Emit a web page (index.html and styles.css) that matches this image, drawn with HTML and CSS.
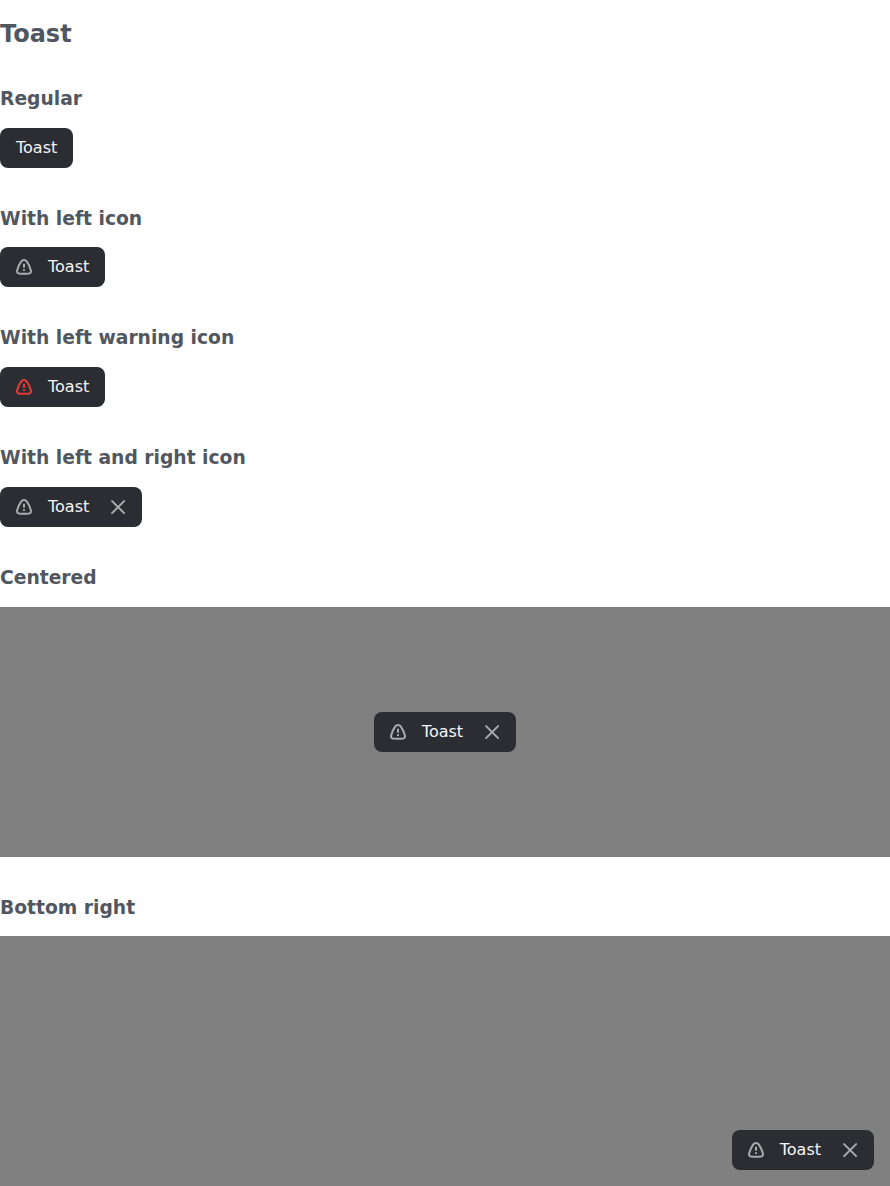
FILE: index.html
```html
<!DOCTYPE html>
<html lang="en">
<head>
<meta charset="utf-8">
<title>Toast</title>
<link rel="stylesheet" href="styles.css">
</head>
<body>
<svg class="symbols" aria-hidden="true">
  <symbol id="alert" viewBox="0 0 16 16">
    <path d="M8 1C6.800 1 6 1.400 5.300 2.400C3.400 5 1.900 8.200 1.100 11.400C.7 13.100 1.400 14.100 3 14.400Q8 15.200 13 14.400C14.600 14.100 15.300 13.100 14.900 11.400C14.100 8.200 12.600 5 10.700 2.400C10 1.400 9.200 1 8 1Z" fill="none" stroke="currentColor" stroke-width="2"/>
    <path d="M8 4.800V8.800M8 10.200V12" fill="none" stroke="currentColor" stroke-width="2"/>
  </symbol>
  <symbol id="close" viewBox="0 0 16 16">
    <path d="M2.100 2.100L14.100 14.100M14.100 2.100L2.100 14.100" fill="none" stroke="currentColor" stroke-width="2" stroke-linecap="round"/>
  </symbol>
</svg>
<h2 class="title">Toast</h2>
<section class="story">
  <h3 class="heading">Regular</h3>
  <div class="toast"><span class="label">Toast</span></div>
</section>
<section class="story">
  <h3 class="heading">With left icon</h3>
  <div class="toast"><svg class="icon"><use href="#alert"/></svg><span class="label">Toast</span></div>
</section>
<section class="story">
  <h3 class="heading">With left warning icon</h3>
  <div class="toast"><svg class="icon warning"><use href="#alert"/></svg><span class="label">Toast</span></div>
</section>
<section class="story">
  <h3 class="heading">With left and right icon</h3>
  <div class="toast"><svg class="icon"><use href="#alert"/></svg><span class="label">Toast</span><svg class="icon close"><use href="#close"/></svg></div>
</section>
<section class="story">
  <h3 class="heading">Centered</h3>
  <div class="stage centered">
    <div class="toast"><svg class="icon"><use href="#alert"/></svg><span class="label">Toast</span><svg class="icon close"><use href="#close"/></svg></div>
  </div>
</section>
<section class="story">
  <h3 class="heading">Bottom right</h3>
  <div class="stage bottom-right">
    <div class="toast"><svg class="icon"><use href="#alert"/></svg><span class="label">Toast</span><svg class="icon close"><use href="#close"/></svg></div>
  </div>
</section>
</body>
</html>
```
FILE: styles.css
```css
* { box-sizing: border-box; }
html { overflow: hidden; }
body {
  margin: 0;
  display: flex;
  flex-direction: column;
  gap: 20px;
  background: #fff;
  color: #515761;
  font: 16px "DejaVu Sans", sans-serif;
}
.symbols { display: none; }
.title {
  margin: 20px 0 0;
  font-size: 24px;
  line-height: 28px;
}
.story { padding-top: 20px; }
.heading {
  margin: 0 0 17.440px;
  font-size: 18.720px;
  line-height: 22.280px;
}
.toast {
  display: flex;
  align-items: center;
  gap: 16px;
  width: fit-content;
  height: 40px;
  padding: 0 16px;
  border-radius: 8px;
  background: #2c2d32;
  color: #f5f5f5;
}
.label { padding-bottom: 1px; }
.icon {
  flex: none;
  width: 16px;
  height: 16px;
  color: #a9aaad;
}
.warning { color: #e53935; }
.close { margin-left: 5px; }
.stage {
  display: flex;
  height: 250px;
  background: #808080;
}
.centered { align-items: center; justify-content: center; }
.bottom-right { align-items: flex-end; justify-content: flex-end; padding: 16px; }
```
